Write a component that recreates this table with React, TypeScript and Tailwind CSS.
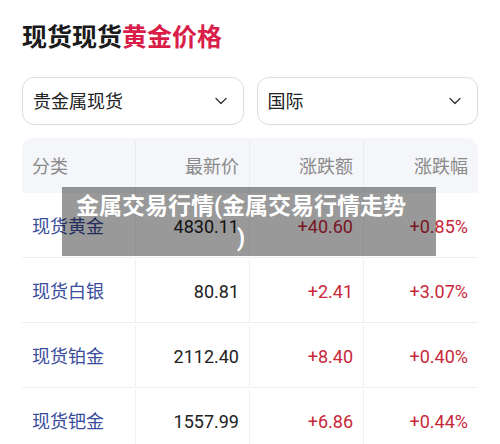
import React from "react";
import { ChevronDown } from "lucide-react";

const rows = [
  { name: "现货黄金", price: "4830.11", chg: "+40.60", pct: "+0.85%" },
  { name: "现货白银", price: "80.81", chg: "+2.41", pct: "+3.07%" },
  { name: "现货铂金", price: "2112.40", chg: "+8.40", pct: "+0.40%" },
  { name: "现货钯金", price: "1557.99", chg: "+6.86", pct: "+0.44%" },
];

export default function App() {
  return (
    <div
      className="relative w-[500px] h-[444px] overflow-hidden bg-white px-[22px]"
      style={{ fontFamily: 'Roboto, "Noto Sans CJK SC", sans-serif' }}
    >
      <div className="pt-[22px] text-[25px] leading-[32px] font-bold text-[#1a1a1a]">
        现货现货<span className="text-[#d81e49]">黄金价格</span>
      </div>

      <div className="mt-[23px] flex gap-[13px]">
        {["贵金属现货", "国际"].map((t) => (
          <div
            key={t}
            className="flex h-[48px] flex-1 items-center justify-between rounded-[12px] border border-[#dcdcdc] pl-[10px] pr-[12px] text-[18px] text-[#222]"
          >
            <span>{t}</span>
            <ChevronDown size={20} strokeWidth={1.5} color="#333" />
          </div>
        ))}
      </div>

      <div className="mt-[13px] overflow-hidden rounded-t-[12px]">
        <div className="grid h-[55px] grid-cols-4 bg-[#f4f6f9] pt-[2px] text-[18px] text-[#8a8a8a]">
          <div className="flex items-center pl-[10px] border-r border-[#e9ecf0]">分类</div>
          <div className="flex items-center justify-end pr-[10px] border-r border-[#e9ecf0]">最新价</div>
          <div className="flex items-center justify-end pr-[10px] border-r border-[#e9ecf0]">涨跌额</div>
          <div className="flex items-center justify-end pr-[10px]">涨跌幅</div>
        </div>
        {rows.map((r) => (
          <div
            key={r.name}
            className="grid h-[65px] grid-cols-4 border-b border-[#efefef] pt-[2px] text-[18px]"
          >
            <div className="flex items-center pl-[10px] border-r border-[#f0f0f0] text-[#3a4d9b]">{r.name}</div>
            <div className="flex items-center justify-end pr-[10px] border-r border-[#f0f0f0] text-[#222]">{r.price}</div>
            <div className="flex items-center justify-end pr-[10px] border-r border-[#f0f0f0] text-[#c8283a]">{r.chg}</div>
            <div className="flex items-center justify-end pr-[10px] text-[#c8283a]">{r.pct}</div>
          </div>
        ))}
      </div>

      <div className="absolute left-[62px] top-[187px] h-[69px] w-[374px] bg-[rgba(0,0,0,0.4)] pr-[16px] pt-[4px] text-center text-[23px] font-bold leading-[32px] text-white whitespace-nowrap">
        金属交易行情(金属交易行情走势
        <br />)
      </div>
    </div>
  );
}
